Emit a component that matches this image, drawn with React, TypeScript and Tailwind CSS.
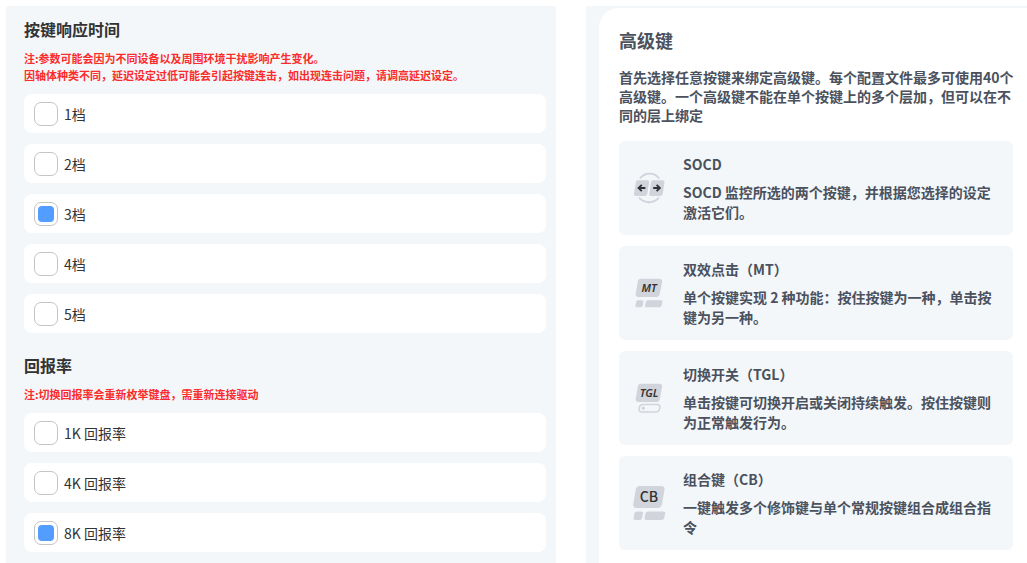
import { useState } from "react";
import type { ReactNode } from "react";

type OptionGroupProps = {
  title: string;
  name: string;
  notes: string[];
  options: string[];
  initial: string;
};

function OptionGroup({ title, name, notes, options, initial }: OptionGroupProps) {
  const [selected, setSelected] = useState(initial);

  return (
    <section>
      <h2 className="text-base leading-6 font-bold text-[#333333]">{title}</h2>
      <div className="mt-[9px] text-[11px] leading-[17px] font-bold text-[#fb2c2c]">
        {notes.map((note) => (
          <p key={note}>{note}</p>
        ))}
      </div>
      <div className="mt-2.5 flex flex-col gap-[11px]">
        {options.map((option) => (
          <label
            key={option}
            className="flex h-[39px] cursor-pointer items-center gap-1.5 rounded-lg bg-white pl-2.5 text-sm text-[#333333]">
            <input
              type="radio"
              name={name}
              value={option}
              checked={selected === option}
              onChange={() => setSelected(option)}
              className="grid size-6 cursor-pointer appearance-none place-content-center rounded-[7px] border border-[#c4c4c4] bg-white before:size-4 before:rounded-sm checked:before:bg-[#529dff]"
            />
            <span>{option}</span>
          </label>
        ))}
      </div>
    </section>
  );
}

function SocdIcon() {
  return (
    <svg width="34" height="34" viewBox="0 0 34 34" aria-hidden="true">
      <g fill="none" stroke="#d0d3da" strokeWidth="1.8" strokeLinecap="round">
        <path d="M7.4 6.8C12.6 1.2 20.6 1.2 25.8 6.8" />
        <path d="M6.4 27.2C12 32.6 20.2 32.6 25.4 27.2" />
      </g>
      <g fill="#d2d4db">
        <path d="M5.3 9.3h9.1c1.2 0 1.9 1 1.7 2.2l-1.8 11.3c-.2 1.3-1.2 2.2-2.4 2.2H3c-1.4 0-2.2-1-2-2.3l1.8-11.2c.2-1.3 1.2-2.2 2.5-2.2z" />
        <path d="M20.3 9.3h9.2c1.4 0 2.2 1 2 2.2l-1.8 11.3c-.2 1.3-1.2 2.2-2.5 2.2H18c-1.2 0-1.9-1-1.7-2.3L18 11.5c.2-1.3 1.1-2.2 2.3-2.2z" />
      </g>
      <g fill="none" stroke="#303236" strokeWidth="1.8">
        <path d="M12.4 17H5.9M8.8 13.8L5.5 17l3.3 3.2" />
        <path d="M20.2 17h6.5M23.6 13.8l3.3 3.2-3.3 3.2" />
      </g>
    </svg>
  );
}

function MtIcon() {
  return (
    <svg width="34" height="34" viewBox="0 0 34 34" aria-hidden="true">
      <g fill="#d2d4db">
        <path d="M7.5 2.7h18.9c2 0 3.1 1.3 2.7 3.2l-2.3 12c-.4 2-1.8 3.1-3.7 3.1H5.3c-2 0-3-1.3-2.6-3.2l2-11.9c.3-2 1.5-3.2 2.8-3.2z" />
        <path d="M5.3 24.3h3.6c1.2 0 1.7.7 1.5 1.7l-.7 3.6c-.2 1.1-1 1.7-2 1.7H4c-1.2 0-1.8-.7-1.6-1.8l.8-3.5c.2-1.1 1-1.7 2.1-1.7z" />
        <path d="M15 24.3h12.9c1.2 0 1.8.7 1.5 1.8l-.8 3.5c-.2 1.1-1 1.7-2.1 1.7H13.6c-1.2 0-1.8-.7-1.5-1.8l.8-3.5c.2-1.1 1-1.7 2.1-1.7z" />
      </g>
      <text x="16" y="16" textAnchor="middle" className="fill-[#333333] font-['Noto_Sans'] text-[11px] font-semibold italic">
        MT
      </text>
    </svg>
  );
}

function TglIcon() {
  return (
    <svg width="34" height="34" viewBox="0 0 34 34" aria-hidden="true">
      <path
        fill="#d2d4db"
        d="M7.5 2.7h18.9c2 0 3.1 1.3 2.7 3.2l-2.3 12c-.4 2-1.8 3.1-3.7 3.1H5.3c-2 0-3-1.3-2.6-3.2l2-11.9c.3-2 1.5-3.2 2.8-3.2z"
      />
      <path
        fill="none"
        stroke="#d2d4db"
        strokeWidth="1.5"
        d="M10 23.5h14.2c2 0 3 1.4 2.6 3.4l-.2 1c-.4 2-1.7 3.1-3.6 3.1H8.8c-2 0-3.1-1.4-2.7-3.4l.2-1c.4-2 1.7-3.1 3.7-3.1z"
      />
      <circle cx="10.3" cy="27.2" r="1.6" fill="#d2d4db" />
      <text x="16" y="16" textAnchor="middle" className="fill-[#333333] font-['Noto_Sans'] text-[11px] font-semibold italic">
        TGL
      </text>
    </svg>
  );
}

function CbIcon() {
  return (
    <svg width="34" height="36" viewBox="0 0 34 36" aria-hidden="true">
      <g fill="#d2d4db">
        <path d="M6.4 1h21.9c2.3 0 3.6 1.5 3.2 3.8L29 19c-.4 2.6-2.1 4-4.4 4H3.4C1 23-.2 21.5.3 19.1L2.7 5C3.1 2.4 4.5 1 6.4 1z" />
        <path d="M3.9 26.4h4.3c1.4 0 2 .8 1.8 2l-.9 4.5c-.3 1.3-1.2 2-2.4 2H2.4c-1.4 0-2.1-.8-1.8-2.1l.9-4.4c.2-1.3 1.1-2 2.4-2z" />
        <path d="M14.9 26.4h15.4c1.4 0 2.1.8 1.8 2.1l-.9 4.4c-.3 1.3-1.2 2-2.5 2H13.3c-1.4 0-2.1-.8-1.8-2.1l.9-4.4c.3-1.3 1.2-2 2.5-2z" />
      </g>
      <text x="16" y="17" textAnchor="middle" className="fill-[#333333] text-sm font-medium">
        CB
      </text>
    </svg>
  );
}

type AdvancedKey = {
  title: string;
  description: string;
  icon: ReactNode;
};

const advancedKeys: AdvancedKey[] = [
  {
    title: "SOCD",
    description: "SOCD 监控所选的两个按键，并根据您选择的设定激活它们。",
    icon: <SocdIcon />,
  },
  {
    title: "双效点击（MT）",
    description: "单个按键实现 2 种功能：按住按键为一种，单击按键为另一种。",
    icon: <MtIcon />,
  },
  {
    title: "切换开关（TGL）",
    description: "单击按键可切换开启或关闭持续触发。按住按键则为正常触发行为。",
    icon: <TglIcon />,
  },
  {
    title: "组合键（CB）",
    description: "一键触发多个修饰键与单个常规按键组合成组合指令",
    icon: <CbIcon />,
  },
];

export default function App() {
  return (
    <main
      lang="zh-CN"
      className="grid min-h-screen grid-cols-[550fr_441fr] gap-[30px] bg-white pt-1.5 pl-1.5 font-['Noto_Sans_CJK_SC',sans-serif]">
      <div className="flex flex-col gap-5 bg-[#f3f7fa] pt-[11px] pr-2.5 pl-[18px]">
        <OptionGroup
          title="按键响应时间"
          name="response-time"
          notes={[
            "注:参数可能会因为不同设备以及周围环境干扰影响产生变化。",
            "因轴体种类不同，延迟设定过低可能会引起按键连击，如出现连击问题，请调高延迟设定。",
          ]}
          options={["1档", "2档", "3档", "4档", "5档"]}
          initial="3档"
        />
        <OptionGroup
          title="回报率"
          name="polling-rate"
          notes={["注:切换回报率会重新枚举键盘，需重新连接驱动"]}
          options={["1K 回报率", "4K 回报率", "8K 回报率"]}
          initial="8K 回报率"
        />
      </div>

      <div className="flex bg-[#f3f7fa] pt-0.5 pl-[13px]">
        <section className="flex-1 rounded-tl-[20px] bg-white pt-[18px] pl-5 text-[#4b515d]">
          <h2 className="text-lg leading-7 font-bold">高级键</h2>
          <p className="mt-3.5 pr-3 text-sm leading-[19px] font-bold">
            首先选择任意按键来绑定高级键。每个配置文件最多可使用40个高级键。一个高级键不能在单个按键上的多个层加，但可以在不同的层上绑定
          </p>
          <ul className="mt-4 flex flex-col gap-[11px] pr-3.5">
            {advancedKeys.map((key) => (
              <li key={key.title} className="flex items-center gap-4 rounded-md bg-[#f3f7fa] py-[13px] pr-5 pl-3.5">
                <span className="shrink-0">{key.icon}</span>
                <div className="text-sm leading-5 font-bold">
                  <h3>{key.title}</h3>
                  <p className="mt-2">{key.description}</p>
                </div>
              </li>
            ))}
          </ul>
        </section>
      </div>
    </main>
  );
}
